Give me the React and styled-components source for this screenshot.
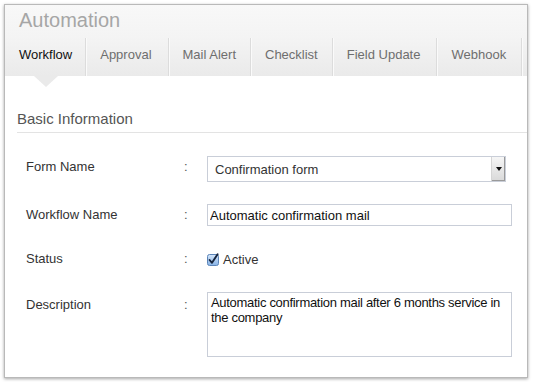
import React from "react";
import styled, { createGlobalStyle } from "styled-components";

const GlobalStyle = createGlobalStyle`
  html, body {
    margin: 0;
    padding: 0;
    background: #ffffff;
  }
  body {
    font-family: "Liberation Sans", Arial, sans-serif;
  }
`;

const Window = styled.div`
  box-sizing: border-box;
  margin: 4px;
  width: 524px;
  height: 374px;
  background: #ffffff;
  border: 1px solid #b9b9b9;
  box-shadow: 0 1px 3px rgba(0, 0, 0, 0.35);
  overflow: hidden;
`;

const Header = styled.div`
  background: linear-gradient(#f8f8f8, #f4f4f4 45%, #eaeaea);
  padding-top: 3px;
`;

const Title = styled.h1`
  margin: 0;
  padding-left: 14px;
  font: 400 20px/24px "Liberation Sans", Arial, sans-serif;
  color: #a6a6a6;
  height: 30px;
`;

const Tabs = styled.ul`
  display: flex;
  list-style: none;
  margin: 0;
  padding: 0;
`;

const Tab = styled.li`
  position: relative;
  flex-shrink: 0;
  box-sizing: border-box;
  height: 38px;
  padding: 9px ${(p) => p.$pad}px 0 14px;
  font: 400 13px/16px "Liberation Sans", Arial, sans-serif;
  white-space: nowrap;
  color: ${(p) => (p.$active ? "#111111" : "#6e6e6e")};
  border-right: 1px solid #dcdcdc;
  box-shadow: 1px 0 0 #fafafa;

  ${(p) =>
    p.$active &&
    `
    &::after {
      content: "";
      position: absolute;
      left: 29px;
      top: 38px;
      border-left: 12px solid transparent;
      border-right: 12px solid transparent;
      border-top: 11px solid #eaeaea;
    }
  `}
`;

const Section = styled.div`
  padding-left: 12px;
`;

const SectionTitle = styled.h2`
  margin: 33px 0 0;
  padding-bottom: 3px;
  font: 400 15px/20px "Liberation Sans", Arial, sans-serif;
  color: #555555;
  border-bottom: 1px solid #e3e3e3;
`;

const Form = styled.div`
  display: grid;
  grid-template-columns: 158px 23px 305px;
  row-gap: 22px;
  margin-top: 23px;
  padding-left: 9px;
`;

const Label = styled.div`
  font: 400 13px/16px "Liberation Sans", Arial, sans-serif;
  color: #333333;
  padding-top: ${(p) => p.$offset}px;
`;

const Colon = styled(Label)`
  color: #555555;
`;

const SelectBox = styled.div`
  box-sizing: border-box;
  display: flex;
  align-items: center;
  width: 299px;
  height: 26px;
  border: 1px solid #c9ced8;
  background: #ffffff;
  font: 400 13px "Liberation Sans", Arial, sans-serif;
  color: #333333;
`;

const SelectText = styled.span`
  flex: 1;
  padding-left: 7px;
`;

const DropButton = styled.span`
  display: flex;
  align-items: center;
  justify-content: center;
  width: 13px;
  height: 100%;
  background: linear-gradient(#f6f6f6, #d9d9d9);
  border-left: 1px solid #d5d5d5;
  box-shadow: inset -1px -1px 0 #9a9a9a;

  &::before {
    content: "";
    border-left: 3px solid transparent;
    border-right: 3px solid transparent;
    border-top: 4px solid #111111;
  }
`;

const TextInput = styled.input`
  box-sizing: border-box;
  width: 305px;
  height: 22px;
  margin: 0;
  padding: 0 2px;
  border: 1px solid #c9ced8;
  font: 400 13px "Liberation Sans", Arial, sans-serif;
  color: #111111;
  outline: none;
`;

const CheckRow = styled.label`
  display: flex;
  align-items: center;
  gap: 4px;
  height: 22px;
  font: 400 13px "Liberation Sans", Arial, sans-serif;
  color: #333333;
`;

const TextArea = styled.textarea`
  box-sizing: border-box;
  display: block;
  width: 305px;
  height: 65px;
  margin: 0;
  padding: 2px 2px 2px 3px;
  border: 1px solid #c9ced8;
  font: 400 13px/15px "Liberation Sans", Arial, sans-serif;
  letter-spacing: -0.3px;
  color: #111111;
  white-space: pre-wrap;
  resize: none;
  overflow: hidden;
  outline: none;
`;

const CheckIcon = () => (
  <svg width="12" height="13" viewBox="0 0 12 13">
    <defs>
      <linearGradient id="cb" x1="0" y1="0" x2="0" y2="1">
        <stop offset="0" stopColor="#d6e7fa" />
        <stop offset="1" stopColor="#86b2e6" />
      </linearGradient>
    </defs>
    <rect x="0.5" y="1.5" width="11" height="11" rx="2" fill="url(#cb)" stroke="#5b84b8" />
    <path d="M2.6 7 L5 9.8 L10.6 1.2" fill="none" stroke="#16243d" strokeWidth="1.9" strokeLinecap="round" strokeLinejoin="round" />
  </svg>
);

const tabs = [
  { name: "Workflow", pad: 13 },
  { name: "Approval", pad: 16 },
  { name: "Mail Alert", pad: 14 },
  { name: "Checklist", pad: 14 },
  { name: "Field Update", pad: 16 },
  { name: "Webhook", pad: 15 },
];

export default function App() {
  return (
    <>
      <GlobalStyle />
      <Window>
        <Header>
          <Title>Automation</Title>
          <Tabs>
            {tabs.map((t, i) => (
              <Tab key={t.name} $active={i === 0} $pad={t.pad}>
                {t.name}
              </Tab>
            ))}
          </Tabs>
        </Header>
        <Section>
          <SectionTitle>Basic Information</SectionTitle>
          <Form>
            <Label $offset={3}>Form Name</Label>
            <Colon $offset={3}>:</Colon>
            <SelectBox>
              <SelectText>Confirmation form</SelectText>
              <DropButton />
            </SelectBox>

            <Label $offset={3}>Workflow Name</Label>
            <Colon $offset={3}>:</Colon>
            <TextInput readOnly value="Automatic confirmation mail" />

            <Label $offset={3}>Status</Label>
            <Colon $offset={3}>:</Colon>
            <CheckRow>
              <CheckIcon />
              Active
            </CheckRow>

            <Label $offset={5}>Description</Label>
            <Colon $offset={5}>:</Colon>
            <TextArea
              readOnly
              value={"Automatic confirmation mail after 6 months service in\nthe company"}
            />
          </Form>
        </Section>
      </Window>
    </>
  );
}
